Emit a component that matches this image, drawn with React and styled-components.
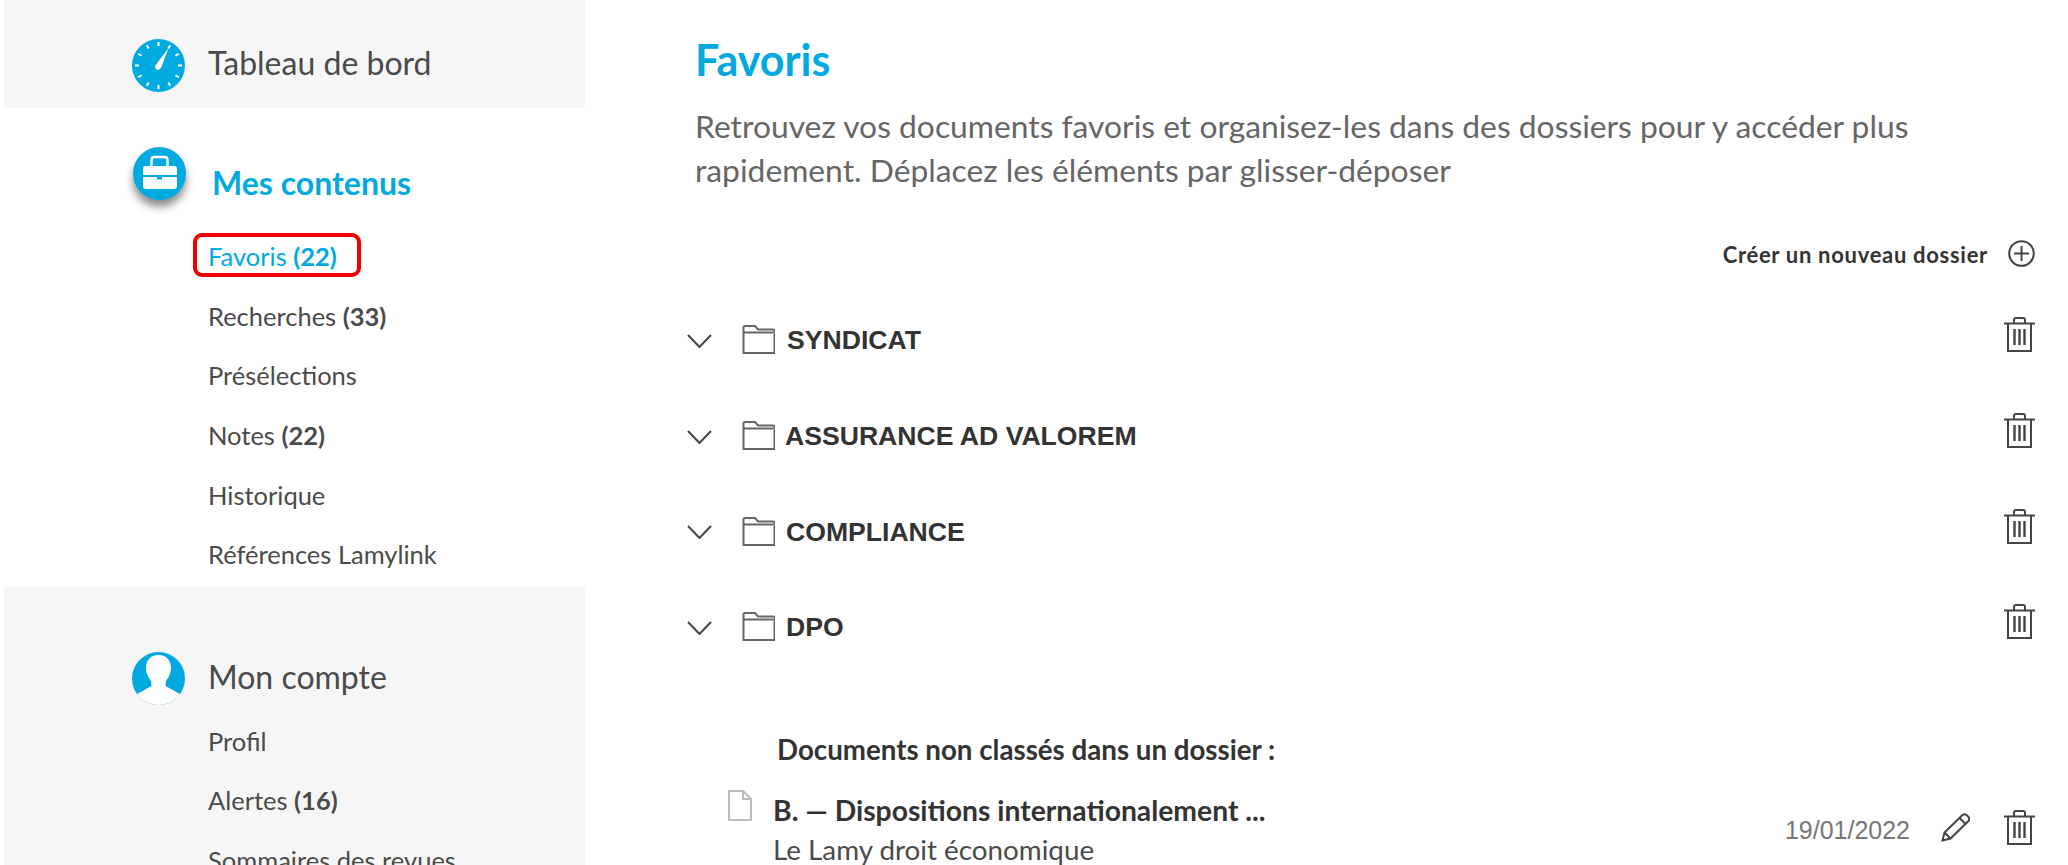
import React from "react";
import styled, { createGlobalStyle } from "styled-components";

const Global = createGlobalStyle`
  html, body { margin: 0; padding: 0; background: #fff; }
  body { font-family: "Lato", "Open Sans", sans-serif; color: #4a4a4a; }
`;
const BLUE = "#00a9e0";

const Page = styled.div`
  display: flex;
  width: 2068px;
  height: 865px;
  overflow: hidden;
`;
const Sidebar = styled.aside`
  width: 581px;
  margin-left: 4px;
  flex: none;
  display: flex;
  flex-direction: column;
`;
const DashPanel = styled.div`
  flex: none;
  height: 108px;
  background: #f6f6f6;
  padding: 39px 0 0 128px;
  box-sizing: border-box;
`;
const ContentPanel = styled.div`
  flex: none;
  height: 478px;
  padding: 39px 0 0 129px;
  box-sizing: border-box;
`;
const AccountPanel = styled.div`
  flex: 1;
  background: #f6f6f6;
  padding: 66px 0 0 128px;
`;
const NavHead = styled.div`
  display: flex;
  align-items: center;
  gap: ${(p) => p.$gap}px;
  height: 53px;
`;
const RoundIcon = styled.svg`
  width: 53px;
  height: 53px;
  flex: none;
  overflow: visible;
  ${(p) => p.$shadow && "filter: drop-shadow(0 7px 4px rgba(0,0,0,.45));"}
`;
const HeadLabel = styled.span`
  font-size: 32px;
  line-height: 40px;
  color: #4a4a4a;
  margin-top: ${(p) => p.$top}px;
`;
const ActiveLabel = styled.span`
  font-size: 32px;
  font-weight: 700;
  line-height: 40px;
  color: ${BLUE};
  margin-top: 18px;
`;
const SubList = styled.ul`
  list-style: none;
  margin: ${(p) => p.$top}px 0 0 ${(p) => p.$left}px;
  padding: 0;
`;
const SubItem = styled.li`
  height: 59.6px;
  display: flex;
  align-items: center;
  font-size: 25.5px;
  color: ${(p) => (p.$active ? BLUE : "#4a4a4a")};
  white-space: pre;
  b { font-weight: 700; }
`;
const Highlight = styled.span`
  position: relative;
  &::after {
    content: "";
    position: absolute;
    left: -15px;
    right: -24px;
    top: -8px;
    bottom: -6px;
    border: 4px solid #f00000;
    border-radius: 9px;
  }
`;
const Main = styled.main`
  flex: 1;
  padding: 35px 33px 0 110px;
  min-width: 0;
`;
const Title = styled.h1`
  margin: 0;
  font-size: 43px;
  line-height: 50px;
  font-weight: 700;
  color: ${BLUE};
`;
const Intro = styled.p`
  margin: 19px 0 0;
  font-size: 31.800px;
  line-height: 44px;
  font-weight: 400;
  color: #666;
  width: 1290px;
`;
const CreateRow = styled.div`
  margin-top: 42px;
  height: 40px;
  display: flex;
  justify-content: flex-end;
  align-items: center;
  gap: 20px;
  font-size: 22px;
  letter-spacing: 0.7px;
  font-weight: 700;
  color: #333;
`;
const CreateIcon = styled.svg`
  width: 27px;
  height: 27px;
  margin-top: -2px;
`;
const Folders = styled.div`
  margin-top: 19px;
`;
const FolderRow = styled.div`
  height: 95.7px;
  margin-left: -8px;
  display: flex;
  align-items: center;
  font-family: "Liberation Sans", Arial, sans-serif;
  font-size: 26.600px;
  font-weight: 700;
  color: #333;
`;
const Chevron = styled.svg`
  width: 25px;
  height: 14px;
  flex: none;
  margin-right: 30px;
`;
const FolderIcon = styled.svg`
  width: 33px;
  height: 29px;
  flex: none;
  margin: -2px ${(p) => p.$gap}px 0 0;
`;
const Trash = styled.svg`
  width: 31px;
  height: 35px;
  flex: none;
  margin-left: auto;
  ${(p) => p.$up && `margin-top: -${p.$up}px;`}
`;
const Unfiled = styled.h2`
  margin: 59px 0 0 82px;
  font-size: 27.700px;
  line-height: 30px;
  font-weight: 700;
  color: #333;
`;
const DocRow = styled.div`
  margin: 29px 0 0 33px;
  display: flex;
  align-items: flex-start;
`;
const DocIcon = styled.svg`
  width: 24px;
  height: 31px;
  flex: none;
  margin: -4px 21px 0 0;
`;
const DocText = styled.div`
  flex: 1;
`;
const DocTitle = styled.div`
  font-size: 28.300px;
  line-height: 32px;
  font-weight: 700;
  color: #333;
`;
const DocSource = styled.div`
  font-size: 27.800px;
  line-height: 48px;
  color: #4a4a4a;
`;
const DocMeta = styled.div`
  display: flex;
  align-items: center;
  margin-top: 16px;
`;
const DocDate = styled.span`
  font-family: "Liberation Sans", Arial, sans-serif;
  font-size: 25px;
  color: #777;
  margin: 6px 31px 0 0;
`;
const Pencil = styled.svg`
  width: 29px;
  height: 29px;
  margin-right: 34px;
`;

const TrashGlyph = ({ up }) => (
  <Trash $up={up} viewBox="0 0 31 35" fill="none" stroke="#444" strokeWidth="2">
    <path d="M0 6.500h31M4 6.500V34h23V6.500M10 6V3q0-2 2-2h7q2 0 2 2v3" />
    <path d="M10.500 12v16M15.500 12v16M20.500 12v16" strokeWidth="2.400" />
  </Trash>
);

const folders = [
  ["SYNDICAT", 12],
  ["ASSURANCE AD VALOREM", 10],
  ["COMPLIANCE", 11],
  ["DPO", 11],
];
const ticks = Array.from({ length: 12 }, (_, i) => i * 30);

export default function App() {
  return (
    <Page>
      <Global />
      <Sidebar>
        <DashPanel>
          <NavHead $gap={23}>
            <RoundIcon viewBox="0 0 53 53">
              <circle cx="26.500" cy="26.500" r="26.500" fill={BLUE} />
              {ticks.map((a) => (
                <rect key={a} x="25.500" y="3" width="2" height="4" fill="#fff" transform={`rotate(${a} 26.500 26.500)`} />
              ))}
              <path d="M36.500 9 L29.500 28 Q27 32.500 24 30 Q22 27.500 24.500 25 Z" fill="#fff" />
            </RoundIcon>
            <HeadLabel $top={-6}>Tableau de bord</HeadLabel>
          </NavHead>
        </DashPanel>
        <ContentPanel>
          <NavHead $gap={26}>
            <RoundIcon $shadow viewBox="0 0 53 53">
              <circle cx="26.500" cy="26.500" r="26.500" fill={BLUE} />
              <path d="M18.500 19v-6q0-3 3-3h10q3 0 3 3v6" fill="none" stroke="#fff" strokeWidth="2.400" />
              <path d="M12 19h29q3 0 3 3v6H10v-6q0-3 2-3z" fill="#fff" />
              <path d="M10 30h14v2.500h5V30h15v9q0 3-3 3H13q-3 0-3-3z" fill="#fff" />
            </RoundIcon>
            <ActiveLabel>Mes contenus</ActiveLabel>
          </NavHead>
          <SubList $top={26.500} $left={75}>
            <SubItem $active>
              <Highlight>Favoris <b>(22)</b></Highlight>
            </SubItem>
            <SubItem>Recherches <b>(33)</b></SubItem>
            <SubItem>Présélections</SubItem>
            <SubItem>Notes <b>(22)</b></SubItem>
            <SubItem>Historique</SubItem>
            <SubItem>Références Lamylink</SubItem>
          </SubList>
        </ContentPanel>
        <AccountPanel>
          <NavHead $gap={23}>
            <RoundIcon viewBox="0 0 53 53">
              <defs>
                <clipPath id="acc"><circle cx="26.500" cy="26.500" r="26.500" /></clipPath>
              </defs>
              <circle cx="26.500" cy="26.500" r="26.500" fill={BLUE} />
              <g clipPath="url(#acc)">
                <path d="M26.500 3C18 3 14 9 14 16c0 6 3 10 5 13l.5 5L5 42v11h43V42l-14.500-8 .5-5c2-3 5-7 5-13 0-7-4-13-12.500-13z" fill="#fff" />
              </g>
            </RoundIcon>
            <HeadLabel $top={-4}>Mon compte</HeadLabel>
          </NavHead>
          <SubList $top={6} $left={76}>
            <SubItem>Profil</SubItem>
            <SubItem>Alertes <b>(16)</b></SubItem>
            <SubItem>Sommaires des revues</SubItem>
          </SubList>
        </AccountPanel>
      </Sidebar>
      <Main>
        <Title>Favoris</Title>
        <Intro>
          Retrouvez vos documents favoris et organisez-les dans des dossiers pour y accéder plus rapidement. Déplacez les éléments par glisser-déposer
        </Intro>
        <CreateRow>
          Créer un nouveau dossier
          <CreateIcon viewBox="0 0 27 27" fill="none" stroke="#444" strokeWidth="2">
            <circle cx="13.500" cy="13.500" r="12.300" />
            <path d="M13.500 6v15M6 13.500h15" />
          </CreateIcon>
        </CreateRow>
        <Folders>
          {folders.map(([name, gap]) => (
            <FolderRow key={name}>
              <Chevron viewBox="0 0 25 14" fill="none" stroke="#444" strokeWidth="2">
                <path d="M1 1l11.500 12L24 1" />
              </Chevron>
              <FolderIcon $gap={gap} viewBox="0 0 33 29" fill="none" stroke="#666" strokeWidth="2">
                <path d="M1.500 28V2.500q0-1.500 1.500-1.500h10l3 3.500h15q1.500 0 1.500 1.500V28z" />
                <path d="M1.500 7.500h30" />
              </FolderIcon>
              {name}
              <TrashGlyph up={12} />
            </FolderRow>
          ))}
        </Folders>
        <Unfiled>Documents non classés dans un dossier :</Unfiled>
        <DocRow>
          <DocIcon viewBox="0 0 24 31" fill="none" stroke="#bbb" strokeWidth="2">
            <path d="M1 1h14l8 8v21H1z" />
            <path d="M15 1v8h8" />
          </DocIcon>
          <DocText>
            <DocTitle>B. — Dispositions internationalement ...</DocTitle>
            <DocSource>Le Lamy droit économique</DocSource>
          </DocText>
          <DocMeta>
            <DocDate>19/01/2022</DocDate>
            <Pencil viewBox="0 0 29 29" fill="none" stroke="#444" strokeWidth="2">
              <path d="M1.500 27.500l2-8L21.500 2q2-1.500 4 0l2 2q1.500 2 0 4L9.500 25.500z" />
              <path d="M3.500 19.500l6 6M18.500 5l6 6" />
            </Pencil>
            <TrashGlyph />
          </DocMeta>
        </DocRow>
      </Main>
    </Page>
  );
}
